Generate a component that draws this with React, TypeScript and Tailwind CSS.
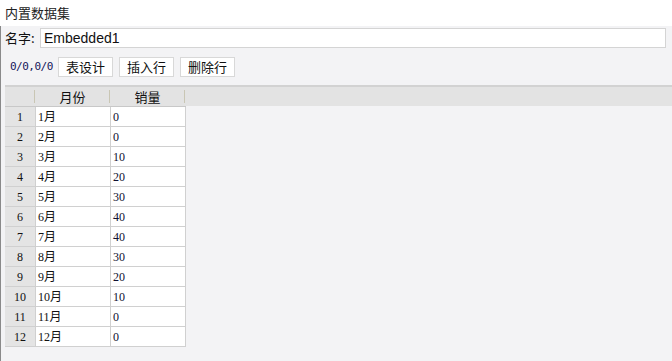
const rows: [string, number][] = [
  ['1月', 0],
  ['2月', 0],
  ['3月', 10],
  ['4月', 20],
  ['5月', 30],
  ['6月', 40],
  ['7月', 40],
  ['8月', 30],
  ['9月', 20],
  ['10月', 10],
  ['11月', 0],
  ['12月', 0],
];

const cjk = "font-['Noto_Sans_CJK_SC',sans-serif]";
const song = "font-['Liberation_Serif','Noto_Sans_CJK_SC',serif]";

export default function App() {
  return (
    <div className="w-[672px] h-[361px] flex flex-col bg-[#f3f3f5] overflow-hidden">
      {/* title */}
      <div className={`h-[26px] shrink-0 bg-white flex items-center pl-[5px] text-[13px] text-[#222] ${cjk}`}>
        内置数据集
      </div>

      <div className="flex-1 flex flex-col border-l border-[#8a8a8a]">
        {/* name row */}
        <div className="flex items-center h-[20px] mt-[2px] pl-[4px] pr-[6px]">
          <span className={`text-[13px] text-[#111] w-[35px] ${cjk}`}>名字:</span>
          <div className="flex-1 h-[20px] bg-white border border-[#d4d4d4] flex items-center pl-[3px] text-[14px] text-[#111] font-['Liberation_Sans',sans-serif]">
            Embedded1
          </div>
        </div>

        {/* toolbar */}
        <div className="flex items-center h-[20px] mt-[9px] pl-[9px] gap-[6px]">
          <span className="text-[11px] text-[#15155a] w-[42px] font-['DejaVu_Sans_Mono',monospace] tracking-[-0.5px]">0/0,0/0</span>
          {['表设计', '插入行', '删除行'].map((b) => (
            <div
              key={b}
              className={`h-[20px] w-[55px] bg-white border border-[#d8d8d8] flex items-center justify-center text-[13px] text-[#111] ${cjk}`}
            >
              {b}
            </div>
          ))}
        </div>

        {/* grid */}
        <div className="mt-[8px] ml-[4px]">
          <div className="h-[21px] bg-[#e3e3e3] border-t-2 border-[#d2d2d2] flex">
            <div className="w-[30px] h-full flex items-center justify-end">
              <span className="w-px h-[13px] bg-[#c9c6b4]" />
            </div>
            <div className={`w-[75px] h-full flex items-center justify-center relative text-[13px] text-[#111] ${cjk}`}>
              月份
              <span className="absolute right-0 top-[3px] w-px h-[13px] bg-[#c9c6b4]" />
            </div>
            <div className={`w-[75px] h-full flex items-center justify-center relative text-[13px] text-[#111] ${cjk}`}>
              销量
              <span className="absolute right-0 top-[3px] w-px h-[13px] bg-[#c9c6b4]" />
            </div>
          </div>
          <div className="w-[181px] border-t border-[#c8c8c8]">
            {rows.map(([m, v], i) => (
              <div key={i} className="flex h-[20px] border-b border-r border-[#d0d0d0]">
                <div className={`w-[30px] bg-[#e4e4e4] flex items-center justify-center text-[12px] text-[#111] ${song}`}>
                  {i + 1}
                </div>
                <div className={`w-[75px] bg-white border-l border-[#d0d0d0] flex items-center pl-[2px] text-[12px] text-[#111] ${song}`}>
                  {m}
                </div>
                <div className={`flex-1 bg-white border-l border-[#d0d0d0] flex items-center pl-[2px] text-[12px] text-[#101030] ${song}`}>
                  {v}
                </div>
              </div>
            ))}
          </div>
        </div>
      </div>
    </div>
  );
}
